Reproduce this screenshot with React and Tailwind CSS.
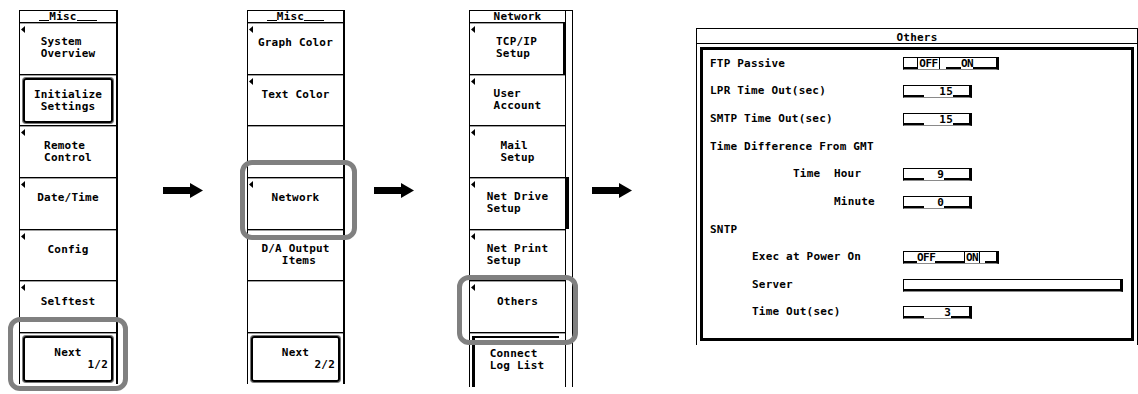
import React from 'react';

const font = "font-['DejaVu_Sans_Mono',monospace] font-bold";

const Tri = () => (
  <svg className="absolute left-[1px] top-[3px]" width="4" height="7" viewBox="0 0 4 7">
    <polygon points="4,0 4,7 0,3.5" fill="#000" />
  </svg>
);

function Lines({ lines }) {
  const single = lines.length === 1;
  return (
    <div className={`whitespace-pre text-left leading-[12px] ${single ? 'pb-[10px]' : ''}`}>
      {lines.join('\n')}
    </div>
  );
}

function Key({ lines = [], tri, boxed, next, className = '', children }) {
  return (
    <div className={`relative flex border-t border-black shadow-[inset_0_1px_0_#a0a0a0] ${className}`}>
      {tri && <Tri />}
      {boxed && (
        <div className="mx-[3px] mt-[3px] mb-[2px] flex flex-1 items-center justify-center rounded-[3px] border-2 border-black shadow-[0_0_0_1px_#777]">
          <Lines lines={lines} />
        </div>
      )}
      {next && (
        <div className="mx-[3px] mt-[3px] mb-[2px] flex flex-1 flex-col rounded-[3px] border-2 border-black px-[3px] pt-[9px] shadow-[0_0_0_1px_#777]">
          <div className="text-center leading-[12px]">Next</div>
          <div className="text-right leading-[12px]">{next}</div>
        </div>
      )}
      {!boxed && !next && !children && lines.length > 0 && (
        <div className="flex flex-1 items-center justify-center">
          <Lines lines={lines} />
        </div>
      )}
      {children}
    </div>
  );
}

function Header({ title, plain }) {
  return (
    <div className="flex h-[12px] items-end justify-center border-t border-black leading-[11px]">
      {!plain && <span className="mb-[1px] w-[10px] border-b border-black" />}
      <span>{title}</span>
      {!plain && <span className="mb-[1px] w-[20px] border-b border-black" />}
    </div>
  );
}

function Arrow({ className = '' }) {
  return (
    <svg className={className} width="40" height="16" viewBox="0 0 40 16">
      <rect x="0" y="4" width="27" height="7" fill="#000" />
      <polygon points="27,0 40,7.5 27,15" fill="#000" />
    </svg>
  );
}

function NumField({ value, right }) {
  return (
    <div className="flex h-[13px] w-[69px] items-end border-t border-l border-r-[3px] border-b border-black border-b-[#8a8a8a] leading-[11px]">
      <span className="w-[20px] border-b-2 border-black" />
      <span className="flex-1" />
      <span>{value}</span>
      <span className={`border-b-2 border-black ${right}`} />
    </div>
  );
}

function OffOnField({ on }) {
  return (
    <div className="flex h-[13px] w-[96px] items-end border-t border-l border-r-[3px] border-b border-black border-b-[#8a8a8a] leading-[11px]">
      {on ? (
        <>
          <span className="w-[13px] border-b-2 border-black" />
          <span className="tracking-[-0.5px]">OFF</span>
          <span className="flex-1 border-b-2 border-black" />
          <span className="flex h-full w-[16px] items-end justify-center border-x border-black tracking-[-0.5px]">ON</span>
          <span className="w-[5px]" />
          <span className="w-[11px] border-b-2 border-black" />
        </>
      ) : (
        <>
          <span className="w-[13px] border-b-2 border-black" />
          <span className="flex h-full w-[23px] items-end justify-center border-x border-black tracking-[-0.5px]">OFF</span>
          <span className="w-[6px]" />
          <span className="w-[15px] border-b-2 border-black" />
          <span className="tracking-[-0.5px]">ON</span>
          <span className="flex-1 border-b-2 border-black" />
        </>
      )}
    </div>
  );
}

function LongField() {
  return (
    <div className="flex h-[13px] w-[220px] items-end border-t border-l border-r-[3px] border-b border-black border-b-[#8a8a8a]">
      <span className="flex-1 border-b-2 border-black" />
    </div>
  );
}

const rows = [
  { label: 'FTP Passive', indent: 0, field: <OffOnField /> },
  { label: 'LPR Time Out(sec)', indent: 0, field: <NumField value="15" right="w-[16px]" /> },
  { label: 'SMTP Time Out(sec)', indent: 0, field: <NumField value="15" right="w-[16px]" /> },
  { label: 'Time Difference From GMT', indent: 0 },
  { label: 'Time  Hour', indent: 83, field: <NumField value="9" right="w-[25px]" /> },
  { label: 'Minute', indent: 124, field: <NumField value="0" right="w-[25px]" /> },
  { label: 'SNTP', indent: 0 },
  { label: 'Exec at Power On', indent: 42, field: <OffOnField on /> },
  { label: 'Server', indent: 42, field: <LongField /> },
  { label: 'Time Out(sec)', indent: 42, field: <NumField value="3" right="w-[18px]" /> },
];

const gridRows = 'grid grid-rows-[repeat(7,51.7px)]';

export default function App() {
  return (
    <div className={`relative flex h-[394px] w-[1138px] items-start overflow-hidden bg-white pl-[19px] text-[11px] tracking-[0.2px] text-black ${font}`}>
      {/* Misc 1/2 */}
      <div className="mt-[10px] flex w-[99px] flex-col border-l border-r-2 border-black">
        <Header title="Misc" />
        <div className={gridRows}>
          <Key tri lines={['System', 'Overview']} />
          <Key boxed lines={['Initialize', ' Settings']} />
          <Key tri lines={['Remote', 'Control']} />
          <Key tri lines={['Date/Time']} />
          <Key tri lines={['Config']} />
          <Key tri lines={['Selftest']} />
          <Key next="1/2" />
        </div>
      </div>

      <Arrow className="ml-[45px] mt-[183px]" />

      {/* Misc 2/2 */}
      <div className="ml-[44px] mt-[10px] flex w-[98px] flex-col border-l border-r-2 border-black">
        <Header title="Misc" />
        <div className={gridRows}>
          <Key tri lines={['Graph Color']} />
          <Key tri lines={['Text Color']} />
          <Key />
          <Key tri lines={['Network']} />
          <Key lines={['D/A Output', '   Items']} />
          <Key />
          <Key next="2/2" />
        </div>
      </div>

      <Arrow className="ml-[29px] mt-[183px]" />

      {/* Network */}
      <div className="ml-[55px] mt-[10px] flex">
        <div className="flex w-[97px] flex-col border-l border-r border-black">
          <Header title="Network" plain />
          <div className="grid grid-rows-[repeat(6,51.7px)_55px]">
            <Key tri lines={['TCP/IP', 'Setup']} className="border-r-2 border-r-black" />
            <Key tri lines={['User', 'Account']} />
            <Key tri lines={['Mail', 'Setup']} />
            <Key tri lines={['Net Drive', 'Setup']} />
            <Key tri lines={['Net Print', 'Setup']} />
            <Key tri lines={['Others']} />
            <Key>
              <div className="ml-[2px] mr-[6px] mt-[3px] flex flex-1 items-center justify-center border-l-[3px] border-t-2 border-black pb-[6px]">
                <Lines lines={['Connect', 'Log List']} />
              </div>
            </Key>
          </div>
        </div>
        <div className="flex w-[7px] flex-col border-r border-black">
          <div className="h-[12px] border-t border-black" />
          <div className="grid grid-rows-[repeat(6,51.7px)_55px]">
            <div />
            <div />
            <div />
            <div className="w-[3px] bg-black" />
            <div />
            <div />
            <div />
          </div>
        </div>
      </div>

      <Arrow className="ml-[19px] mt-[183px]" />

      {/* Others dialog */}
      <div className="ml-[64px] mt-[28px] flex h-[317px] w-[442px] flex-col border-l border-r border-t border-black">
        <div className="flex h-[15px] items-end justify-center border-b border-black leading-[11px]">
          <span className="bg-white px-[1px]">Others</span>
        </div>
        <div className="mx-[3px] mt-[3px] h-[294px] border-[3px] border-black">
          {rows.map((r) => (
            <div key={r.label} className="flex h-[27.67px] items-center">
              <div className="w-[200px] whitespace-pre pl-[7px]">
                <span style={{ paddingLeft: r.indent }}>{r.label}</span>
              </div>
              {r.field}
            </div>
          ))}
        </div>
      </div>

      {/* highlight rings */}
      <div className="absolute left-[8px] top-[317px] h-[74px] w-[120px] rounded-[12px] border-[5px] border-[#808080]" />
      <div className="absolute left-[240px] top-[160px] h-[80px] w-[117px] rounded-[12px] border-[5px] border-[#808080]" />
      <div className="absolute left-[457px] top-[275px] h-[70px] w-[121px] rounded-[12px] border-[5px] border-[#808080]" />
    </div>
  );
}
